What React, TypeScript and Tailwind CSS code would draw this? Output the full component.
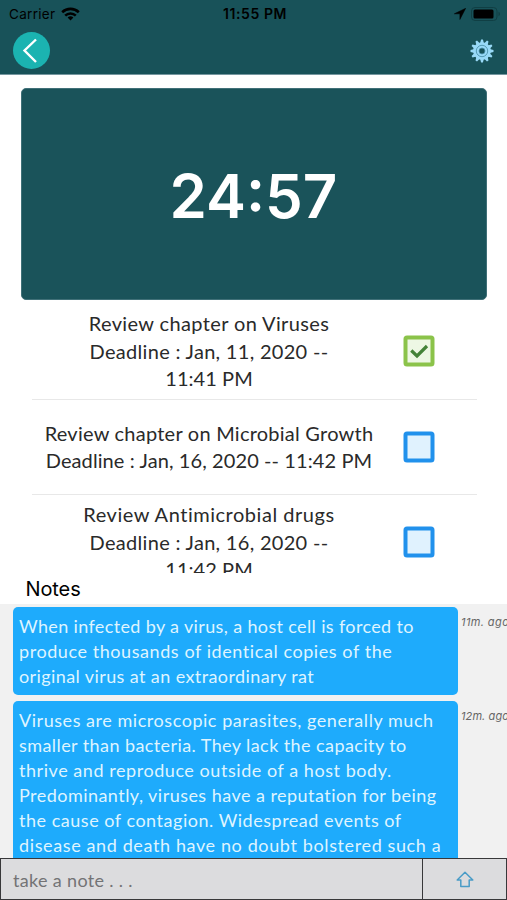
const tasks = [
  {
    lines: [
      { text: "Review chapter on Viruses", spacing: "tracking-[0.38px]" },
      { text: "Deadline : Jan, 11, 2020 --", spacing: "tracking-[0.3px]" },
      { text: "11:41 PM", spacing: "tracking-[0.05px]" },
    ],
    done: true,
  },
  {
    lines: [
      { text: "Review chapter on Microbial Growth", spacing: "tracking-[0.24px]" },
      { text: "Deadline : Jan, 16, 2020 -- 11:42 PM", spacing: "tracking-[0.1px]" },
    ],
    done: false,
  },
  {
    lines: [
      { text: "Review Antimicrobial drugs", spacing: "tracking-[0.53px]" },
      { text: "Deadline : Jan, 16, 2020 --", spacing: "tracking-[0.3px]" },
      { text: "11:42 PM", spacing: "tracking-[0.05px]" },
    ],
    done: false,
  },
];

const notes = [
  {
    ago: "11m. ago",
    agoSpacing: "tracking-[0.4px]",
    lines: [
      { text: "When infected by a virus, a host cell is forced to", spacing: "tracking-[0.36px]" },
      { text: "produce thousands of identical copies of the", spacing: "tracking-[0.57px]" },
      { text: "original virus at an extraordinary rat", spacing: "tracking-[0.4px]" },
    ],
  },
  {
    ago: "12m. ago",
    agoSpacing: "tracking-[0.1px]",
    lines: [
      { text: "Viruses are microscopic parasites, generally much", spacing: "tracking-[0.54px]" },
      { text: "smaller than bacteria. They lack the capacity to", spacing: "tracking-[0.42px]" },
      { text: "thrive and reproduce outside of a host body.", spacing: "tracking-[0.55px]" },
      { text: "Predominantly, viruses have a reputation for being", spacing: "tracking-[0.46px]" },
      { text: "the cause of contagion. Widespread events of", spacing: "tracking-[0.52px]" },
      { text: "disease and death have no doubt bolstered such a", spacing: "tracking-[0.62px]" },
    ],
  },
];

function StatusBar() {
  return (
    <div className="grid h-7 grid-cols-3 items-center pl-[9px] pr-[6px] text-[13.5px] text-black">
      <div className="flex items-center gap-[6px]">
        <span className="tracking-[0.3px]">Carrier</span>
        <svg width="19" height="14" viewBox="0 0 19 14" fill="none" stroke="#000" strokeWidth="2.6">
          <path d="M1.2 5.2a12 12 0 0 1 16.6 0" />
          <path d="M4.2 8.6a7.6 7.6 0 0 1 10.6 0" />
          <path d="M9.5 13.5 6.6 10.6a4.2 4.2 0 0 1 5.8 0z" fill="#000" stroke="none" />
        </svg>
      </div>
      <span className="pb-px text-center text-[14px] font-semibold tracking-[0.6px]">11:55 PM</span>
      <div className="flex items-center justify-end gap-[5px]">
        <svg width="12" height="12" viewBox="0 0 12 12">
          <path d="M11.7.3.3 5.8h5.6v5.7z" fill="#000" stroke="#000" strokeWidth=".5" strokeLinejoin="round" />
        </svg>
        <svg width="30" height="14" viewBox="0 0 30 14">
          <rect x=".5" y=".5" width="25.5" height="13" rx="3.5" fill="none" stroke="#103f44" />
          <rect x="2.5" y="2.5" width="20" height="9" rx="1.5" fill="#000" />
          <path d="M27.5 4.8v4.4q1.5-.6 1.5-2.2t-1.5-2.2" fill="#103f44" />
        </svg>
      </div>
    </div>
  );
}

function Gear() {
  const teeth = [0, 30, 60, 90, 120, 150, 180, 210, 240, 270, 300, 330];
  return (
    <svg width="24" height="24" viewBox="0 0 24 24">
      {teeth.map((a) => (
        <path key={a} d="M10 4.5 11.1.5h1.8L14 4.5z" fill="#98d9f7" transform={`rotate(${a} 12 12)`} />
      ))}
      <circle cx="12" cy="12" r="8.8" fill="#98d9f7" />
      <circle cx="12" cy="12" r="5.7" fill="none" stroke="#4d93ad" strokeWidth=".9" />
      <circle cx="12" cy="12" r="3" fill="#185259" stroke="#4d93ad" strokeWidth=".8" />
    </svg>
  );
}

function Checkbox({ done }: { done: boolean }) {
  return (
    <svg width="32" height="32" viewBox="0 0 32 32" className="shrink-0">
      <rect
        x="2.5"
        y="2.5"
        width="27"
        height="27"
        rx="1.5"
        fill={done ? "#edf7e4" : "#e0f2fe"}
        stroke={done ? "#8bc34a" : "#2191ec"}
        strokeWidth="4"
      />
      {done && <path d="m8.3 15.5 5.7 5.5L24 11" fill="none" stroke="#448238" strokeWidth="3.2" />}
    </svg>
  );
}

export default function App() {
  return (
    <div className="flex h-[900px] w-[507px] flex-col overflow-hidden bg-white font-['Inter',sans-serif]">
      <header className="h-[75px] shrink-0 border-b border-[#7597a0] bg-[#185259]">
        <StatusBar />
        <div className="flex items-center justify-between px-[13px] pt-1">
          <button aria-label="Back" className="flex size-[37px] items-center justify-center rounded-full bg-[#1bb3b1]">
            <svg width="37" height="37" viewBox="0 0 37 37" fill="none" stroke="#fff" strokeWidth="2.4">
              <path d="M23 7.5 11.5 18.5 23 30" />
            </svg>
          </button>
          <button aria-label="Settings">
            <Gear />
          </button>
        </div>
      </header>

      <section className="ml-[21px] mt-[13px] flex h-[212px] w-[466px] shrink-0 items-center justify-center rounded-[5px] border border-[#407078] bg-[#1a535a] pt-[3px]">
        <span className="-ml-px text-[60px] font-semibold leading-none text-white">24:57</span>
      </section>

      <ul className="h-[273px] shrink-0 overflow-hidden pl-8 pr-[30px] pt-[4px] font-['Lato',sans-serif]">
        {tasks.map((task, i) => (
          <li key={i} className="flex h-[95.5px] items-center border-b border-[#e8e8e8]">
            <div className="w-[354px] text-center text-[20px] leading-[27.2px] text-[#2a2a2a]">
              {task.lines.map((l, j) => (
                <div key={j} className={`whitespace-nowrap ${l.spacing}`}>{l.text}</div>
              ))}
            </div>
            <div className="ml-[17px]">
              <Checkbox done={task.done} />
            </div>
          </li>
        ))}
      </ul>

      <h2 className="h-[31px] shrink-0 pl-[25.5px] pt-px text-[20px] leading-[31px] tracking-[-0.1px] text-black">Notes</h2>

      <div className="flex min-h-0 flex-1 flex-col gap-[6px] overflow-hidden bg-[#f1f1f1] pl-[13px] pt-[3px]">
        {notes.map((note) => (
          <div key={note.ago} className="flex shrink-0 items-start gap-[3px]">
            <div className="w-[445px] shrink-0 rounded-[5px] bg-[#1eabfc] px-[6px] py-[6.5px] font-['Lato',sans-serif] text-[18px] leading-[25px] text-[#dff4ff]">
              {note.lines.map((l, j) => (
                <div key={j} className={`whitespace-nowrap ${l.spacing}`}>{l.text}</div>
              ))}
            </div>
            <span className={`mt-[8px] whitespace-nowrap text-[11px] italic leading-[15px] text-[#666] ${note.agoSpacing}`}>
              {note.ago}
            </span>
          </div>
        ))}
      </div>

      <footer className="flex h-[42px] shrink-0 border border-[#38383a] bg-[#dcdcde]">
        <div className="flex flex-1 items-center border-r border-[#38383a] pl-3 pt-[3px] font-['Lato',sans-serif] text-[18px] tracking-[0.33px] text-[#737375]">
          take a note . . .
        </div>
        <button aria-label="Send" className="flex w-[83px] items-center justify-center pt-px">
          <svg width="18" height="17" viewBox="0 0 18 17" fill="none" stroke="#4a9cc7" strokeWidth="1.5" strokeLinejoin="round">
            <path d="M9 1.2 1.2 9h3.6v6.5h8.4V9h3.6z" />
          </svg>
        </button>
      </footer>
    </div>
  );
}
